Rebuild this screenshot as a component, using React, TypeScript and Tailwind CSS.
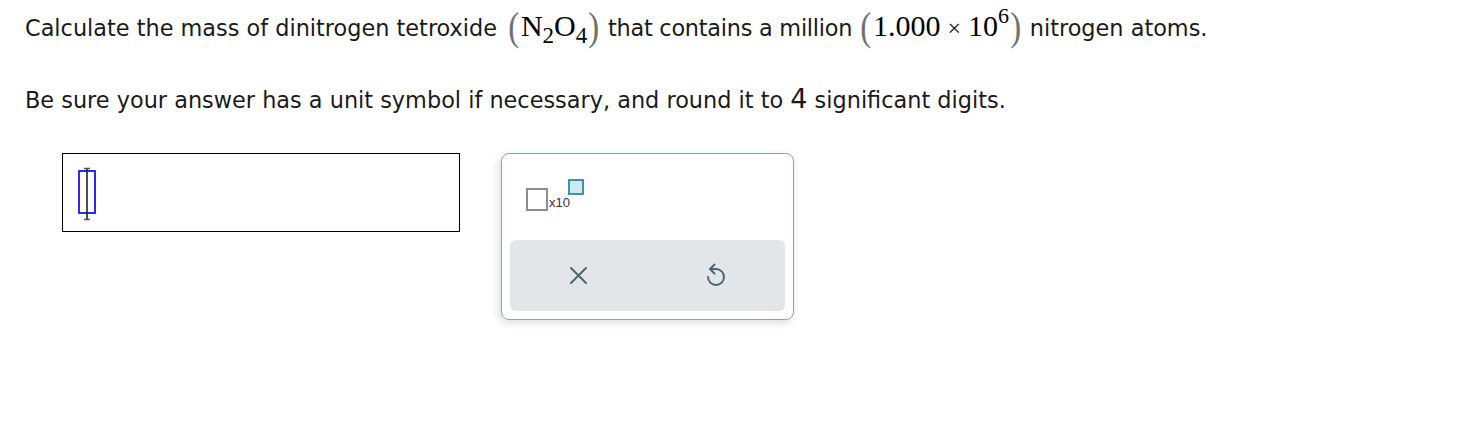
import React from 'react';

function Paren({ side }: { side: 'l' | 'r' }) {
  return (
    <span className="inline-block align-[-4px] leading-[0px] text-[41px] text-[#707070] font-['Liberation_Serif',serif] font-light scale-x-[0.8]">
      {side === 'l' ? '(' : ')'}
    </span>
  );
}

function CursorMark() {
  return (
    <svg width="22" height="54" viewBox="0 0 22 54">
      <rect x="3" y="4" width="16" height="42" fill="none" stroke="#2b2bf0" strokeWidth="2" />
      <line x1="11" y1="1.5" x2="11" y2="52.5" stroke="#222" strokeWidth="1.6" />
      <path d="M8 1.5 h6 M8 52.5 h6" stroke="#555" strokeWidth="1.5" />
    </svg>
  );
}

export default function App() {
  return (
    <div className="w-[1466px] h-[422px] bg-white font-['DejaVu_Sans',Verdana,sans-serif] text-[#1a1a1a]">
      <div className="pl-[25px] pt-[14px]">
        {/* question */}
        <p className="text-[22.4px] leading-[28px] whitespace-nowrap">
          Calculate the mass of dinitrogen tetroxide{' '}
          <span className="ml-[3px] leading-[0px] font-['Liberation_Serif',serif] text-[30px] text-black">
            <Paren side="l" />
            N<span className="text-[23px] align-[-7px]">2</span>O
            <span className="text-[23px] align-[-7px]">4</span>
            <Paren side="r" />
          </span>{' '}
          <span className="tracking-[-0.25px]">that contains a million</span>{' '}
          <span className="leading-[0px] font-['Liberation_Serif',serif] text-[30px] text-black">
            <Paren side="l" />
            1.000<span className="mx-[7px] text-[24px]">×</span>10
            <span className="text-[22px] align-[13px]">6</span>
            <Paren side="r" />
          </span>{' '}
          nitrogen atoms.
        </p>

        <p className="mt-[44px] text-[22.4px] leading-[28px] whitespace-nowrap">
          Be sure your answer has a unit symbol if necessary, and round it to{' '}
          <span className="text-[27px] leading-[0px]">4</span> significant digits.
        </p>

        {/* answer area */}
        <div className="mt-[39px] flex items-start">
          <div className="ml-[37px] w-[398px] h-[79px] border border-black pl-[13px] pt-[13px]">
            <CursorMark />
          </div>

          <div className="ml-[41px] w-[293px] h-[167px] border border-[#8fa1a9] rounded-[8px] shadow-[-2px_3px_8px_rgba(0,0,0,0.14)] px-[8px] pt-[25px] pb-[8px] flex flex-col">
            <div className="ml-[16px] flex items-end h-[33px]">
              <span className="mb-[1px] w-[22px] h-[23px] border-2 border-[#7f929b] bg-white" />
              <span className="ml-[1px] mb-[3px] text-[13px] leading-none text-[#333] font-['Liberation_Sans',Arial,sans-serif]">x10</span>
              <span className="self-start -ml-[2px] w-[16px] h-[16px] border-2 border-[#3c93ad] bg-[#cfe9f1]" />
            </div>
            <div className="mt-auto h-[71px] bg-[#e2e6e9] rounded-[6px] grid grid-cols-2 items-center">
              <div className="flex justify-center">
                <svg width="19" height="19" viewBox="0 0 19 19">
                  <path d="M2 2 L17 17 M17 2 L2 17" stroke="#4b6673" strokeWidth="2" strokeLinecap="round" />
                </svg>
              </div>
              <div className="flex justify-center">
                <svg width="24" height="26" viewBox="0 0 24 26">
                  <path d="M6.5 6 H12 A8 8 0 1 1 4 14" fill="none" stroke="#4b6673" strokeWidth="2" strokeLinecap="round" />
                  <path d="M10.5 1.5 L6 6 L10.5 10.5" fill="none" stroke="#4b6673" strokeWidth="2" strokeLinecap="round" strokeLinejoin="round" />
                </svg>
              </div>
            </div>
          </div>
        </div>
      </div>
    </div>
  );
}
